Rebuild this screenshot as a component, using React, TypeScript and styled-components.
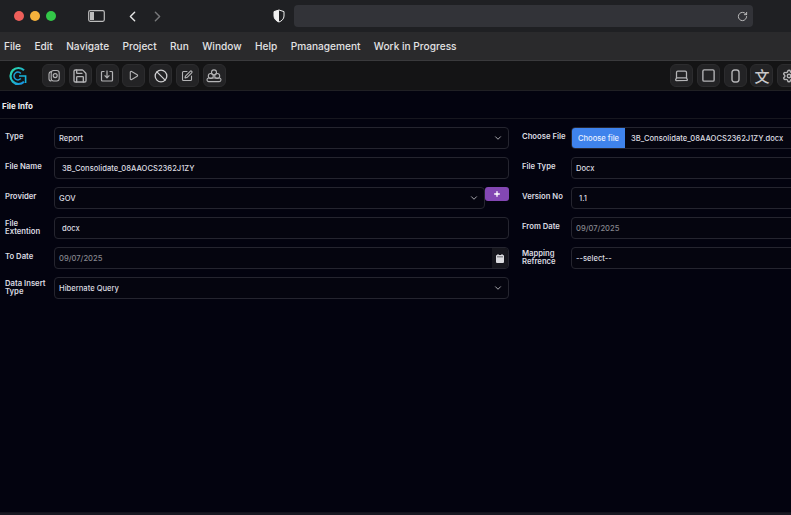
import styled, { createGlobalStyle } from 'styled-components';
import { ChevronDown, ChevronLeft, ChevronRight, RotateCw, Plus, Play, Ban, SquarePen, Save, Laptop, Square, Settings } from 'lucide-react';

const Global = createGlobalStyle`
  html, body {
    margin: 0;
    height: 100%;
    overflow: hidden;
    background: #03030f;
  }
  * { box-sizing: border-box; }
  body { font-family: Inter, "Liberation Sans", sans-serif; }
`;

const Page = styled.div`
  width: 791px;
  height: 515px;
  display: flex;
  flex-direction: column;
  overflow: hidden;
`;

const BrowserBar = styled.div`
  height: 32px;
  background: #1f2023;
  display: flex;
  align-items: center;
  padding-left: 14px;
  color: #d8d8d8;
`;

const Light = styled.span<{ $color: string }>`
  width: 10px;
  height: 10px;
  border-radius: 50%;
  background: ${p => p.$color};
  margin-right: 6px;
`;

const SidebarIcon = styled.svg`
  margin-left: 26px;
  margin-right: 19px;
`;

const ShieldIcon = styled.svg`
  margin-left: 99px;
  margin-right: 9px;
`;

const NavButton = styled.span<{ $dim?: boolean }>`
  display: flex;
  width: 25px;
  color: ${p => (p.$dim ? '#77787a' : '#e4e4e4')};
`;

const AddressBar = styled.div`
  width: 459px;
  height: 22px;
  background: #323338;
  border-radius: 4px;
  display: flex;
  align-items: center;
  justify-content: flex-end;
  padding-right: 5px;
  color: #c4c4c4;
`;

const MenuBar = styled.div`
  height: 29px;
  background: #2a2a2c;
  border-bottom: 1px solid #3a3a3c;
  display: flex;
  align-items: center;
  gap: 13.4px;
  padding-left: 4px;
  font-size: 10.15px;
  font-weight: 500;
  color: #e2e2e4;
`;

const ToolBar = styled.div`
  height: 30px;
  background: #141415;
  border-bottom: 1px solid #202024;
  display: flex;
  align-items: center;
  padding-left: 8px;
`;

const Logo = styled.svg`
  margin-right: 14px;
`;

const ToolButton = styled.span`
  width: 23px;
  height: 23px;
  flex: none;
  background: #232325;
  border: 1px solid #2c2c2e;
  border-radius: 6px;
  margin-right: 3.8px;
  display: flex;
  align-items: center;
  justify-content: center;
  color: #b4b4b6;
`;

const ToolSpacer = styled.div`
  flex: 1;
`;

const RightTools = styled.div`
  display: flex;
  flex: none;
  width: 121px;
  overflow: hidden;
`;

const LangGlyph = styled.span`
  font-family: "Noto Sans CJK SC", sans-serif;
  font-size: 15px;
  font-weight: 500;
  line-height: 1;
  color: #c8c8ca;
`;

const Title = styled.div`
  height: 28px;
  border-bottom: 1px solid #17171f;
  display: flex;
  align-items: center;
  padding: 2px 0 0 2px;
  font-size: 8px;
  font-weight: 700;
  color: #ececf0;
`;

const Form = styled.div`
  flex: 1;
  display: flex;
  padding: 8px 0 0 5px;
`;

const Column = styled.div<{ $width: number; $left?: number }>`
  width: ${p => p.$width}px;
  margin-left: ${p => p.$left ?? 0}px;
  flex: none;
  display: flex;
  flex-direction: column;
  gap: 8px;
`;

const Row = styled.div`
  display: flex;
  align-items: flex-start;
  height: 22px;
`;

const Label = styled.div<{ $two?: boolean }>`
  width: 49px;
  flex: none;
  font-size: 7.7px;
  font-weight: 600;
  line-height: 7.5px;
  color: #dcdce2;
  padding-top: ${p => (p.$two ? '3px' : '6px')};
  padding-right: 4px;
`;

const Field = styled.div<{ $muted?: boolean; $input?: boolean }>`
  flex: 1;
  height: 22px;
  min-width: 0;
  border: 1px solid #25252f;
  border-radius: 4px;
  background: #05050f;
  display: flex;
  align-items: center;
  justify-content: space-between;
  padding: 0 5px 0 ${p => (p.$input ? '7px' : '4px')};
  font-size: 7.6px;
  font-weight: 500;
  color: ${p => (p.$muted ? '#85858d' : '#dcdce0')};
  overflow: hidden;
  white-space: nowrap;
`;

const Chevron = styled(ChevronDown)`
  color: #c8c8cc;
  flex: none;
`;

const AddButton = styled.button`
  width: 24px;
  height: 14px;
  flex: none;
  padding: 0;
  border: 0;
  border-radius: 3px;
  background: #8347b3;
  color: #fff;
  display: flex;
  align-items: center;
  justify-content: center;
`;

const DateIcon = styled.span`
  align-self: stretch;
  width: 16px;
  margin-right: -5px;
  background: #16161d;
  display: flex;
  align-items: center;
  justify-content: center;
`;

const FileField = styled(Field)`
  justify-content: flex-start;
  padding: 0;
`;

const FileButton = styled.span`
  align-self: stretch;
  width: 53px;
  flex: none;
  background: #3f83ec;
  color: #e8f0ff;
  display: flex;
  align-items: center;
  justify-content: center;
  margin-right: 6px;
`;

const Footer = styled.div`
  height: 3px;
  flex: none;
  background: #181822;
  border-top: 1px solid #12121c;
`;

const CopyIcon = () => (
  <svg width="14" height="14" viewBox="0 0 14 14" fill="none" stroke="currentColor" strokeWidth="1.1">
    <path d="M4 2.6 C2.6 3 2 4 2 5 V10 C2 11.2 3 12 4.4 12" />
    <rect x="4.2" y="1.5" width="8" height="10.5" rx="2.4" />
    <circle cx="8.2" cy="6.6" r="2" />
  </svg>
);

const TrayDownIcon = () => (
  <svg width="14" height="14" viewBox="0 0 14 14" fill="none" stroke="currentColor" strokeWidth="1.2">
    <path d="M4.5 2.5 H2.5 Q1.5 2.5 1.5 3.5 V11 Q1.5 12 2.5 12 H11.5 Q12.5 12 12.5 11 V3.5 Q12.5 2.5 11.5 2.5 H9.5" />
    <path d="M7 1.5 V8.6 M4.6 6.4 L7 8.8 L9.4 6.4" />
  </svg>
);

const ClusterIcon = () => (
  <svg width="16" height="14" viewBox="0 0 16 14" fill="none" stroke="currentColor" strokeWidth="1.1">
    <circle cx="8" cy="3.4" r="2.5" />
    <circle cx="4.8" cy="7" r="2.5" />
    <circle cx="11.2" cy="7" r="2.5" />
    <rect x="1" y="9" width="14" height="3.6" rx="1.8" />
  </svg>
);

const PhoneIcon = () => (
  <svg width="9" height="14" viewBox="0 0 9 14" fill="none">
    <rect x="1" y="1" width="7" height="12" rx="2.4" stroke="currentColor" strokeWidth="1.4" />
  </svg>
);

const tools = [
  <CopyIcon />,
  <Save size={16} />,
  <TrayDownIcon />,
  <Play size={11} strokeWidth={2.4} />,
  <Ban size={14} strokeWidth={2.2} color="#cfcfd1" />,
  <SquarePen size={12} strokeWidth={2.2} />,
  <ClusterIcon />,
];

export default function App() {
  return (
    <Page>
      <Global />
      <BrowserBar>
        <Light $color="#ee5f5a" />
        <Light $color="#f4b13c" />
        <Light $color="#33c748" />
        <SidebarIcon width="17" height="12" viewBox="0 0 17 12" fill="none">
          <rect x="0.7" y="0.7" width="15.6" height="10.6" rx="1.5" stroke="#bdbdbd" strokeWidth="1.2" />
          <rect x="2" y="2" width="4" height="8" fill="#bdbdbd" />
        </SidebarIcon>
        <NavButton><ChevronLeft size={17} /></NavButton>
        <NavButton $dim><ChevronRight size={17} /></NavButton>
        <ShieldIcon width="12" height="14" viewBox="0 0 12 14">
          <path d="M6 1 L11 2.6 V7 C11 10 8.5 12.2 6 13 C3.5 12.2 1 10 1 7 V2.6 Z" fill="#1f2023" stroke="#f0f0f0" />
          <path d="M6 1 L1 2.6 V7 C1 10 3.5 12.2 6 13 Z" fill="#f0f0f0" />
        </ShieldIcon>
        <AddressBar><RotateCw size={11} /></AddressBar>
      </BrowserBar>
      <MenuBar>
        <span>File</span>
        <span>Edit</span>
        <span>Navigate</span>
        <span>Project</span>
        <span>Run</span>
        <span>Window</span>
        <span>Help</span>
        <span>Pmanagement</span>
        <span>Work in Progress</span>
      </MenuBar>
      <ToolBar>
        <Logo width="20" height="20" viewBox="0 0 20 20" fill="none">
          <defs>
            <linearGradient id="logoGrad" x1="0" y1="0" x2="1" y2="1">
              <stop offset="0" stopColor="#2be0a8" />
              <stop offset="1" stopColor="#1590e8" />
            </linearGradient>
          </defs>
          <path d="M16 4.2 A8 8 0 1 0 16 15.8" stroke="url(#logoGrad)" strokeWidth="2.2" />
          <path d="M12.8 7.4 A3.9 3.9 0 1 0 12.8 12.6" stroke="#1c9fd8" strokeWidth="1.5" />
          <path d="M11 10 H17.6 V17" stroke="#17b4dc" strokeWidth="1.6" />
        </Logo>
        {tools.map((icon, i) => (
          <ToolButton key={i}>{icon}</ToolButton>
        ))}
        <ToolSpacer />
        <RightTools>
          <ToolButton><Laptop size={15} /></ToolButton>
          <ToolButton><Square size={15} strokeWidth={2.2} /></ToolButton>
          <ToolButton><PhoneIcon /></ToolButton>
          <ToolButton><LangGlyph>文</LangGlyph></ToolButton>
          <ToolButton><Settings size={14} strokeWidth={2.4} /></ToolButton>
        </RightTools>
      </ToolBar>
      <Title>File Info</Title>
      <Form>
        <Column $width={504}>
          <Row>
            <Label>Type</Label>
            <Field>Report<Chevron size={10} /></Field>
          </Row>
          <Row>
            <Label>File Name</Label>
            <Field $input>3B_Consolidate_08AAOCS2362J1ZY</Field>
          </Row>
          <Row>
            <Label>Provider</Label>
            <Field>GOV<Chevron size={10} /></Field>
            <AddButton><Plus size={8} strokeWidth={4} /></AddButton>
          </Row>
          <Row>
            <Label $two>File Extention</Label>
            <Field $input>docx</Field>
          </Row>
          <Row>
            <Label>To Date</Label>
            <Field $muted>
              09/07/2025
              <DateIcon>
                <svg width="8" height="9" viewBox="0 0 8 9">
                  <path d="M1.5 0 H2.5 V1 H5.5 V0 H6.5 V1 H7 Q8 1 8 2 V8 Q8 9 7 9 H1 Q0 9 0 8 V2 Q0 1 1 1 H1.5 Z" fill="#dcdce0" />
                  <rect x="1" y="2.6" width="6" height="0.6" fill="#16161d" />
                </svg>
              </DateIcon>
            </Field>
          </Row>
          <Row>
            <Label $two>Data Insert Type</Label>
            <Field>Hibernate Query<Chevron size={10} /></Field>
          </Row>
        </Column>
        <Column $width={290} $left={13}>
          <Row>
            <Label>Choose File</Label>
            <FileField>
              <FileButton>Choose file</FileButton>
              3B_Consolidate_08AAOCS2362J1ZY.docx
            </FileField>
          </Row>
          <Row>
            <Label>File Type</Label>
            <Field>Docx</Field>
          </Row>
          <Row>
            <Label>Version No</Label>
            <Field $input>1.1</Field>
          </Row>
          <Row>
            <Label>From Date</Label>
            <Field $muted>09/07/2025</Field>
          </Row>
          <Row>
            <Label $two>Mapping Refrence</Label>
            <Field>--select--</Field>
          </Row>
        </Column>
      </Form>
      <Footer />
    </Page>
  );
}
